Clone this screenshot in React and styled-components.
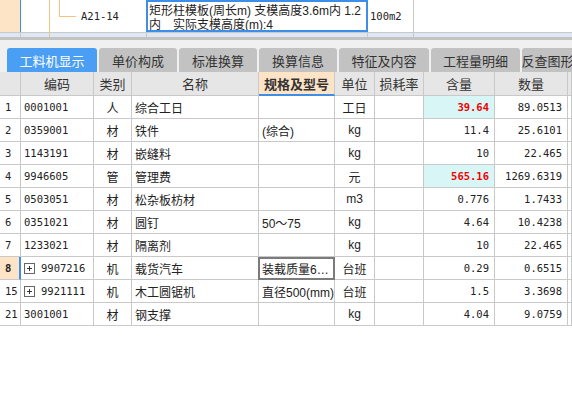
import React from "react";
import styled, { createGlobalStyle, css } from "styled-components";

const Global = createGlobalStyle`
  html, body { margin: 0; padding: 0; background: #fff; }
  body { width: 572px; height: 402px; overflow: hidden; font-family: "Noto Sans CJK SC", "Noto Sans", sans-serif; color: #222; }
`;

const CJK = `"Noto Sans CJK SC", "Noto Sans", sans-serif`;
const DATA = `"Liberation Sans", "Noto Sans CJK SC", sans-serif`;
const MONO = `"DejaVu Sans Mono", "Liberation Mono", monospace`;
const LINE = "#c9c9c9";
const PEACH = "#fde4c6";
const BLUE = "#3d8ee8";

const Page = styled.div`
  width: 572px;
  display: flex;
  flex-direction: column;
`;

/* ---------- upper grid ---------- */
const UpperRow = styled.div`
  display: grid;
  grid-template-columns: 21px 29px 97px 221px 46px 1fr;
  height: 33px;
  border-bottom: 1px solid ${LINE};
  box-sizing: border-box;
`;

const UpperCell = styled.div`
  box-sizing: border-box;
  position: relative;
  border-right: 1px solid ${(p) => p.$line || LINE};
  background: ${(p) => p.$bg || "#fff"};
  font-family: ${DATA};
  font-size: 12px;
  display: flex;
  align-items: center;
  ${(p) =>
    p.$selected &&
    css`
      border: 2px solid ${BLUE};
      margin-left: -1px;
      padding: 2px 0 0 1px;
      line-height: 14px;
      display: block;
      white-space: nowrap;
      overflow: hidden;
    `}
`;

const TreeLine = styled.span`
  position: absolute;
  left: 9px;
  top: 0;
  width: 16px;
  height: 16px;
  border-left: 1px solid #f6c27f;
  border-bottom: 1px solid #f6c27f;
`;

const Code = styled.span`
  font-family: ${MONO};
  font-size: 10.5px;
  margin-left: ${(p) => p.$ml || 3}px;
`;

const Strip = styled.div`
  display: grid;
  grid-template-columns: 21px 29px 97px 221px 46px 1fr;
  height: 4px;
  background: #dde8f4;
  border-bottom: 3px solid #c3c3c3;
`;

const StripCell = styled.div`
  border-right: 1px solid ${(p) => p.$line || LINE};
`;

/* ---------- tabs ---------- */
const TabBar = styled.div`
  background: #f0f0f0;
  height: 32px;
  box-sizing: border-box;
  padding: 8px 0 0 7px;
  display: flex;
  gap: 2px;
  overflow: hidden;
`;

const Tab = styled.div`
  flex: none;
  width: ${(p) => p.$w}px;
  height: 24px;
  border-radius: 3px 3px 0 0;
  background: ${(p) => (p.$active ? "#4a9ff5" : "#c2c2c2")};
  color: ${(p) => (p.$active ? "#fff" : "#333")};
  font-family: ${CJK};
  font-size: 13px;
  display: flex;
  align-items: center;
  justify-content: center;
  white-space: nowrap;
  overflow: hidden;
`;

/* ---------- table ---------- */
const Grid = styled.div`
  display: grid;
  grid-template-columns: 21px 73px 38px 127px 76px 40px 49px 71px 73px 1fr;
`;

const HeadCell = styled.div`
  box-sizing: border-box;
  height: 24px;
  background: ${(p) => (p.$hl ? PEACH : "#e6e6e6")};
  border-right: 1px solid ${LINE};
  border-bottom: ${(p) => (p.$hl ? `2px solid ${BLUE}` : `1px solid ${LINE}`)};
  font-family: ${CJK};
  font-size: 13px;
  font-weight: ${(p) => (p.$hl ? 700 : 400)};
  color: #333;
  display: flex;
  align-items: center;
  justify-content: center;
  white-space: nowrap;
  overflow: hidden;
`;

const Cell = styled.div`
  box-sizing: border-box;
  height: 23px;
  border-right: 1px solid ${LINE};
  border-bottom: 1px solid ${LINE};
  background: ${(p) => p.$bg || "#fff"};
  display: flex;
  align-items: center;
  justify-content: ${(p) => (p.$align === "center" ? "center" : p.$align === "right" ? "flex-end" : "flex-start")};
  padding: ${(p) => (p.$align === "right" ? "0 5px 0 0" : p.$align === "center" ? "0" : "0 0 0 3px")};
  font-family: ${(p) => (p.$mono ? MONO : DATA)};
  font-size: ${(p) => (p.$mono ? "10.5px" : "12px")};
  color: ${(p) => (p.$red ? "#f00000" : "#222")};
  font-weight: ${(p) => (p.$bold ? 700 : 400)};
  white-space: nowrap;
  overflow: hidden;
  ${(p) =>
    p.$cur &&
    css`
      border: 2px solid #7b7b7b;
      margin-left: -1px;
      padding-left: 2px;
    `}
`;

const NumCell = styled(Cell)`
  padding: 0 0 0 5px;
  font-family: ${MONO};
  font-size: 10.5px;
  background: ${(p) => (p.$active ? PEACH : "#fff")};
  font-weight: ${(p) => (p.$active ? 700 : 400)};
  border-right: ${(p) => (p.$active ? `2px solid ${BLUE}` : `1px solid ${LINE}`)};
`;

const Expander = styled.span`
  flex: none;
  width: 9px;
  height: 9px;
  border: 1px solid #666;
  margin-right: 6px;
  position: relative;
  &::before, &::after {
    content: "";
    position: absolute;
    background: #333;
  }
  &::before { left: 2px; right: 2px; top: 4px; height: 1px; }
  &::after { top: 2px; bottom: 2px; left: 4px; width: 1px; }
`;

const headers = [
  { t: "" },
  { t: "编码" },
  { t: "类别" },
  { t: "名称" },
  { t: "规格及型号", hl: true },
  { t: "单位" },
  { t: "损耗率" },
  { t: "含量" },
  { t: "数量" },
  { t: "" },
];

const rows = [
  { n: "1", code: "0001001", cat: "人", name: "综合工日", spec: "", unit: "工日", qty: "39.64", total: "89.0513", hot: true },
  { n: "2", code: "0359001", cat: "材", name: "铁件", spec: "(综合)", unit: "kg", qty: "11.4", total: "25.6101" },
  { n: "3", code: "1143191", cat: "材", name: "嵌缝料", spec: "", unit: "kg", qty: "10", total: "22.465" },
  { n: "4", code: "9946605", cat: "管", name: "管理费", spec: "", unit: "元", qty: "565.16", total: "1269.6319", hot: true },
  { n: "5", code: "0503051", cat: "材", name: "松杂板枋材", spec: "", unit: "m3", qty: "0.776", total: "1.7433" },
  { n: "6", code: "0351021", cat: "材", name: "圆钉", spec: "50～75", unit: "kg", qty: "4.64", total: "10.4238" },
  { n: "7", code: "1233021", cat: "材", name: "隔离剂", spec: "", unit: "kg", qty: "10", total: "22.465" },
  { n: "8", code: "9907216", cat: "机", name: "载货汽车", spec: "装载质量6…", unit: "台班", qty: "0.29", total: "0.6515", exp: true, active: true },
  { n: "15", code: "9921111", cat: "机", name: "木工圆锯机", spec: "直径500(mm)", unit: "台班", qty: "1.5", total: "3.3698", exp: true },
  { n: "21", code: "3001001", cat: "材", name: "钢支撑", spec: "", unit: "kg", qty: "4.04", total: "9.0759" },
];

const tabs = [
  { t: "工料机显示", w: 90, active: true },
  { t: "单价构成", w: 78 },
  { t: "标准换算", w: 78 },
  { t: "换算信息", w: 78 },
  { t: "特征及内容", w: 90 },
  { t: "工程量明细", w: 89 },
  { t: "反查图形工程量", w: 90 },
];

export default function App() {
  return (
    <Page>
      <Global />
      <UpperRow>
        <UpperCell $bg={PEACH} $line={BLUE} />
        <UpperCell $line="#f6c27f" />
        <UpperCell>
          <TreeLine />
          <Code $ml={31}>A21-14</Code>
        </UpperCell>
        <UpperCell $selected>
          矩形柱模板(周长m) 支模高度3.6m内 1.2
          <br />
          内　实际支模高度(m):4
        </UpperCell>
        <UpperCell>
          <Code $ml={2}>100m2</Code>
        </UpperCell>
        <UpperCell $line="transparent" />
      </UpperRow>
      <Strip>
        <StripCell />
        <StripCell $line="#f6c27f" />
        <StripCell />
        <StripCell />
        <StripCell />
        <StripCell $line="transparent" />
      </Strip>
      <TabBar>
        {tabs.map((t) => (
          <Tab key={t.t} $w={t.w} $active={t.active}>
            {t.t}
          </Tab>
        ))}
      </TabBar>
      <Grid>
        {headers.map((h, i) => (
          <HeadCell key={i} $hl={h.hl}>
            {h.t}
          </HeadCell>
        ))}
        {rows.map((r) => (
          <React.Fragment key={r.n}>
            <NumCell $active={r.active}>{r.n}</NumCell>
            <Cell $mono>
              {r.exp && <Expander />}
              {r.code}
            </Cell>
            <Cell $align="center">{r.cat}</Cell>
            <Cell>{r.name}</Cell>
            <Cell $cur={r.active}>{r.spec}</Cell>
            <Cell $align="center">{r.unit}</Cell>
            <Cell />
            <Cell $align="right" $mono $bg={r.hot ? "#d8f6f6" : undefined} $red={r.hot} $bold={r.hot}>
              {r.qty}
            </Cell>
            <Cell $align="right" $mono>
              {r.total}
            </Cell>
            <Cell />
          </React.Fragment>
        ))}
      </Grid>
    </Page>
  );
}
